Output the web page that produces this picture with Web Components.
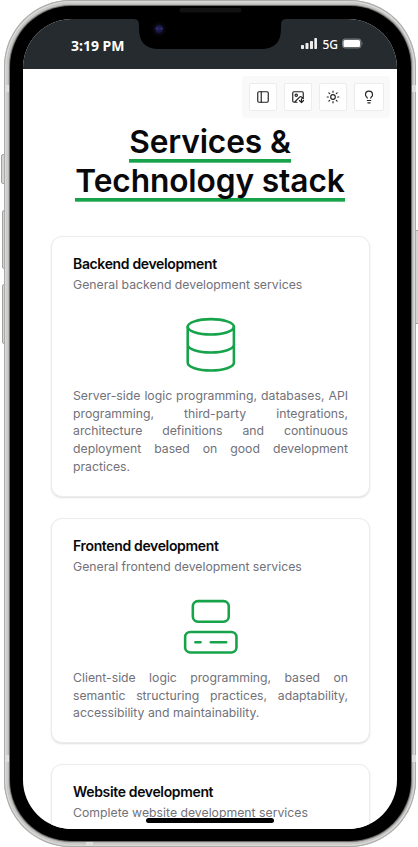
<!DOCTYPE html>
<html lang="en">
<head>
<meta charset="utf-8">
<title>Services &amp; Technology stack</title>
<style>
html,body{margin:0;background:#fff;overflow:hidden}
body{width:418px;height:847px;font-family:Inter,sans-serif}
</style>
</head>
<body>
<phone-frame>
  <status-bar slot="status"><span>3:19 PM</span><span slot="network">5G</span></status-bar>
  <tool-bar slot="page">
    <tool-button name="panel"></tool-button>
    <tool-button name="image"></tool-button>
    <tool-button name="sun"></tool-button>
    <tool-button name="bulb"></tool-button>
  </tool-bar>
  <page-title slot="page">Services &amp;<br>Technology stack</page-title>
  <service-list slot="page">
    <service-card style="height:261px" icon="database">
      <span slot="title">Backend development</span>
      <span slot="subtitle">General backend development services</span>
      Server-side logic programming, databases, API programming, third-party integrations, architecture definitions and continuous deployment based on good development practices.
    </service-card>
    <service-card style="height:225px" icon="computer">
      <span slot="title">Frontend development</span>
      <span slot="subtitle">General frontend development services</span>
      Client-side logic programming, based on semantic structuring practices, adaptability, accessibility and maintainability.
    </service-card>
    <service-card style="height:225px">
      <span slot="title">Website development</span>
      <span slot="subtitle">Complete website development services</span>
    </service-card>
  </service-list>
</phone-frame>
<script>
function define(name, render) {
  customElements.define(name, class extends HTMLElement {
    constructor() {
      super();
      this.attachShadow({ mode: 'open' });
    }
    connectedCallback() {
      const t = document.createElement('template');
      t.innerHTML = render(this);
      this.shadowRoot.replaceChildren(t.content.cloneNode(true));
    }
  });
}

const icons = {
  panel: '<rect x="3" y="3" width="18" height="18" rx="2"/><path d="M9 3v18"/>',
  image: '<path d="M10.3 21H5a2 2 0 0 1-2-2V5a2 2 0 0 1 2-2h14a2 2 0 0 1 2 2v10l-3.1-3.1a2 2 0 0 0-2.8 0L6 21"/><circle cx="9" cy="9" r="2"/><path d="M18 15v6.5M14.5 18l3.5 3.5 3.5-3.5"/>',
  sun: '<circle cx="12" cy="12" r="4"/><path d="M12 2v2M12 20v2M4.93 4.93l1.41 1.41M17.66 17.66l1.41 1.41M2 12h2M20 12h2M6.34 17.66l-1.41 1.41M19.07 4.93l-1.41 1.41"/>',
  bulb: '<path d="M15 14c.2-1 .7-1.7 1.5-2.5C17.5 10.6 18 9.3 18 8A6 6 0 0 0 6 8c0 1 .2 2.2 1.5 3.5.7.7 1.3 1.5 1.5 2.5M9 18h6M10 22h4"/>',
  database: '<ellipse cx="12" cy="5" rx="9" ry="3"/><path d="M3 5v14a9 3 0 0 0 18 0V5M3 12a9 3 0 0 0 18 0"/>',
  computer: '<rect width="14" height="8" x="5" y="2" rx="2"/><rect width="20" height="8" x="2" y="14" rx="2"/><path d="M6 18h2M12 18h6"/>'
};

define('phone-frame', () => `
<style>
:host{display:block;position:relative;width:418px;height:847px;overflow:hidden}
.key{position:absolute;box-sizing:border-box;background:#d3d3d1;border:1px solid #a3a3a1;border-radius:2px}
.shell{position:absolute;left:4px;top:0;width:412px;height:847px;box-sizing:border-box;padding:6px 5px 6px 6px;border-radius:67px;background:#d2d1ce;box-shadow:inset 0 0 0 1px #a9aaa9,inset 0 0 0 2.5px #d9d9d7,inset 0 0 0 3.2px #c2c2c0}
.bezel{box-sizing:border-box;width:401px;height:835px;padding:13px 14px 12px 13px;border-radius:61px;background:#000;box-shadow:0 0 1.5px .7px #555}
.screen{width:374px;height:810px;border-radius:49px;overflow:hidden;background:#fff}
.seam{position:absolute;background:#dededc}
.notch{position:absolute;left:134px;top:8px}
.home{position:absolute;left:146px;top:818px;width:128px;height:5px;border-radius:3px;background:#000}
</style>
<div class="key" style="left:1px;top:154px;width:6px;height:30px"></div>
<div class="key" style="left:2px;top:210px;width:5px;height:59px"></div>
<div class="key" style="left:2px;top:284px;width:5px;height:60px"></div>
<div class="key" style="left:414px;top:230px;width:6px;height:94px"></div>
<div class="shell"><div class="bezel"><div class="screen"><slot name="status"></slot><slot name="page"></slot></div></div></div>
<i class="seam" style="left:5px;top:85px;width:4px;height:7px"></i>
<i class="seam" style="left:5px;top:755px;width:4px;height:7px"></i>
<i class="seam" style="left:412px;top:85px;width:4px;height:7px"></i>
<i class="seam" style="left:412px;top:755px;width:4px;height:7px"></i>
<i class="seam" style="left:86px;top:842px;width:7px;height:4px"></i>
<svg class="notch" width="152" height="42">
  <defs><radialGradient id="lens"><stop offset="0" stop-color="#26265e"/><stop offset=".45" stop-color="#15153a"/><stop offset=".6" stop-color="#090611"/><stop offset="1" stop-color="#020102"/></radialGradient></defs>
  <path d="M0 10V11Q5 11 5 17V21Q5 41 25 41H127Q147 41 147 21V17Q147 11 152 11V10Z"/>
  <circle cx="25" cy="21" r="8" fill="url(#lens)"/>
  <circle cx="23" cy="20.5" r="1" fill="#34348a"/><circle cx="27.5" cy="20.5" r="1" fill="#34348a"/>
  <rect x="45.500" y="0" width="62" height="4.500" rx="2" fill="#111"/>
</svg>
<div class="home"></div>`);

define('status-bar', () => `
<style>
:host{display:flex;justify-content:space-between;box-sizing:border-box;width:374px;height:50px;padding:17px 34px 0 48px;background:#262b2f;color:#fff;font:700 14px/20px "Noto Sans",sans-serif}
.right{display:flex;align-items:center;gap:4px;height:16px;font-weight:500;font-size:12px}
.net{padding-top:2px}
</style>
<slot></slot>
<div class="right">
<svg width="17" height="12" fill="#eee" style="margin-top:-3px"><rect x="0" y="8" width="3" height="4" rx=".7"/><rect x="4.500" y="6" width="3" height="6" rx=".7"/><rect x="9" y="4" width="3" height="8" rx=".7"/><rect x="13.300" y="1" width="2.700" height="11" rx=".7"/></svg>
<span class="net"><slot name="network"></slot></span>
<svg width="21" height="12"><rect x=".5" y="1" width="18.500" height="9" rx="2.500" fill="#555a5d" stroke="#777c7f"/><rect x="1.500" y="2" width="16.500" height="7" rx="1.500" fill="#fff"/><path d="M20 4q1 1.500 0 3z" fill="#999"/></svg>
</div>`);

define('tool-bar', () => `
<style>
:host{display:flex;gap:7px;box-sizing:border-box;width:148px;height:42px;margin:7px 0 0 219px;padding:7px;border-radius:4px;background:#f9f9f9}
::slotted(*){flex:0 0 28px}
::slotted(:last-child){flex-basis:30px}
</style><slot></slot>`);

define('tool-button', el => `
<style>
:host{display:flex;align-items:center;justify-content:center;box-sizing:border-box;height:28px;border:1px solid #ececee;border-radius:2px;background:#fff;color:#222}
svg{width:14px;height:14px}
</style>
<svg viewBox="0 0 24 24" fill="none" stroke="currentColor" stroke-width="2" stroke-linecap="round" stroke-linejoin="round">${icons[el.getAttribute('name')]}</svg>`);

define('page-title', () => `
<style>
:host{display:block;padding-top:4px;text-align:center;color:#09090b;font:600 31.700px/39px Inter,sans-serif;letter-spacing:-.12px}
span{padding-bottom:2px;background:linear-gradient(#16a34a,#16a34a) 0 100%/100% 3.700px no-repeat}
</style><span><slot></slot></span>`);

define('service-list', () => `
<style>
:host{display:flex;flex-direction:column;gap:21px;padding:36px 27px 0 28px}
</style><slot></slot>`);

define('service-card', el => `
<style>
:host{display:flex;flex-direction:column;flex:none;box-sizing:border-box;padding:18px 21px 0;border:1px solid #ececee;border-radius:11px;background:#fff;box-shadow:0 1px 2px rgba(0,0,0,.13)}
h2{margin:0;color:#09090b;font:600 14px/18px Inter,sans-serif;letter-spacing:-.35px}
.sub{color:#71717a;font:400 12.250px/18px Inter,sans-serif;margin-top:3px}
svg{display:block;width:61.600px;height:61.600px;margin:20px auto 11.700px;color:#16a34a}
.text{color:#71717a;font:400 12.250px/17.600px Inter,sans-serif;text-align:justify}
</style>
<h2><slot name="title"></slot></h2>
<div class="sub"><slot name="subtitle"></slot></div>
${el.hasAttribute('icon') ? `<svg viewBox="0 0 24 24" fill="none" stroke="currentColor" stroke-width="1" stroke-linecap="round" stroke-linejoin="round">${icons[el.getAttribute('icon')]}</svg>` : ''}
<div class="text"><slot></slot></div>`);
</script>
</body>
</html>
